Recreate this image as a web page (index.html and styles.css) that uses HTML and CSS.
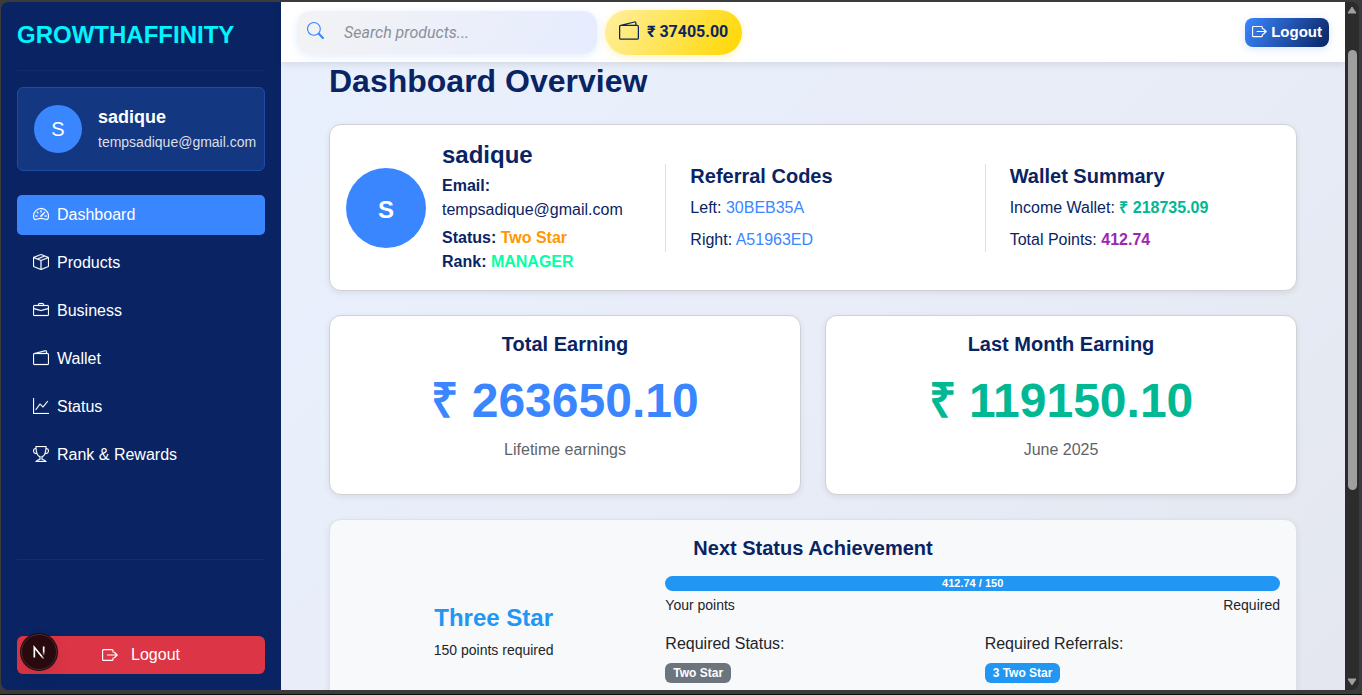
FILE: index.html
```
<!DOCTYPE html>
<html lang="en">
<head>
<meta charset="utf-8">
<title>GrowthAffinity – Dashboard</title>
<link rel="stylesheet" href="styles.css">
</head>
<body>
<svg class="sprite" aria-hidden="true">
  <symbol id="i-speed" viewBox="0 0 16 16"><path d="M8 4a.5.5 0 0 1 .5.5V6a.5.5 0 0 1-1 0V4.500A.5.5 0 0 1 8 4zM3.732 5.732a.5.5 0 0 1 .707 0l.915.914a.5.5 0 1 1-.708.708l-.914-.915a.5.5 0 0 1 0-.707zM2 10a.5.5 0 0 1 .5-.5h1.586a.5.5 0 0 1 0 1H2.500A.5.5 0 0 1 2 10zm9.500 0a.5.5 0 0 1 .5-.5h1.500a.5.5 0 0 1 0 1H12a.5.5 0 0 1-.5-.5zm.754-4.246a.389.389 0 0 0-.527-.02L7.547 9.310a.910.910 0 1 0 1.302 1.258l3.434-4.297a.389.389 0 0 0-.029-.518z"/><path fill-rule="evenodd" d="M0 10a8 8 0 1 1 15.547 2.661c-.442 1.253-1.845 1.602-2.932 1.250C11.309 13.488 9.475 13 8 13c-1.474 0-3.310.488-4.615.911-1.087.352-2.490.003-2.932-1.250A7.988 7.988 0 0 1 0 10zm8-7a7 7 0 0 0-6.603 9.329c.203.575.923.876 1.680.630C4.397 12.533 6.358 12 8 12s3.604.532 4.923.960c.757.245 1.477-.056 1.680-.631A7 7 0 0 0 8 3z"/></symbol>
  <symbol id="i-box" viewBox="0 0 16 16"><path d="M8.186 1.113a.5.5 0 0 0-.372 0L1.846 3.500l2.404.961L10.404 2l-2.218-.887zm3.564 1.426L5.596 5 8 5.961 14.154 3.500l-2.404-.961zm3.250 1.700-6.500 2.600v7.922l6.500-2.600V4.240zM7.500 14.762V6.838L1 4.239v7.923l6.500 2.600zM7.443.184a1.500 1.500 0 0 1 1.114 0l7.129 2.852A.5.5 0 0 1 16 3.500v8.662a1 1 0 0 1-.629.928l-7.185 2.874a.5.5 0 0 1-.372 0L.630 13.090a1 1 0 0 1-.630-.928V3.500a.5.5 0 0 1 .314-.464L7.443.184z"/></symbol>
  <symbol id="i-case" viewBox="0 0 16 16"><path d="M6.500 1A1.500 1.500 0 0 0 5 2.500V3H1.500A1.500 1.500 0 0 0 0 4.500v8A1.500 1.500 0 0 0 1.500 14h13a1.500 1.500 0 0 0 1.500-1.500v-8A1.500 1.500 0 0 0 14.500 3H11v-.5A1.500 1.500 0 0 0 9.500 1h-3zm0 1h3a.5.5 0 0 1 .5.5V3H6v-.5a.5.5 0 0 1 .5-.5zm1.886 6.914L15 7.151V12.500a.5.5 0 0 1-.5.5h-13a.5.5 0 0 1-.5-.5V7.150l6.614 1.764a1.500 1.500 0 0 0 .772 0zM1.500 4h13a.5.5 0 0 1 .5.5v1.616L8.129 7.948a.5.5 0 0 1-.258 0L1 6.116V4.500a.5.5 0 0 1 .5-.5z"/></symbol>
  <symbol id="i-wallet" viewBox="0 0 16 16"><path d="M12.136.326A1.500 1.500 0 0 1 14 1.780V3h.5A1.500 1.500 0 0 1 16 4.500v9a1.500 1.500 0 0 1-1.500 1.500h-13A1.500 1.500 0 0 1 0 13.500v-9a1.500 1.500 0 0 1 1.432-1.499L12.136.326zM5.562 3H13V1.780a.5.5 0 0 0-.621-.484L5.562 3zM1.500 4a.5.5 0 0 0-.5.5v9a.5.5 0 0 0 .5.5h13a.5.5 0 0 0 .5-.5v-9a.5.5 0 0 0-.5-.5h-13z"/></symbol>
  <symbol id="i-graph" viewBox="0 0 16 16"><path fill-rule="evenodd" d="M0 0h1v15h15v1H0V0zm14.817 3.113a.5.5 0 0 1 .07.704l-4.500 5.500a.5.5 0 0 1-.740.037L7.060 6.767l-3.656 5.027a.5.5 0 0 1-.808-.588l4-5.500a.5.5 0 0 1 .758-.06l2.609 2.610 4.150-5.073a.5.5 0 0 1 .704-.07z"/></symbol>
  <symbol id="i-trophy" viewBox="0 0 16 16"><path d="M2.500.5A.5.5 0 0 1 3 0h10a.5.5 0 0 1 .5.5c0 .538-.012 1.050-.034 1.536a3 3 0 1 1-1.133 5.890c-.790 1.865-1.878 2.777-2.833 3.011v2.173l1.425.356c.194.048.377.135.537.255L13.300 15.100a.5.5 0 0 1-.3.900H3a.5.5 0 0 1-.3-.9l1.838-1.379c.160-.120.343-.207.537-.255L6.500 13.110v-2.173c-.955-.234-2.043-1.146-2.833-3.012a3 3 0 1 1-1.132-5.890A33.076 33.076 0 0 1 2.500.5zm.099 2.540a2 2 0 0 0 .720 3.935c-.333-1.050-.588-2.346-.720-3.935zm10.083 3.935a2 2 0 0 0 .720-3.935c-.133 1.590-.388 2.885-.720 3.935zM3.504 1c.007.517.026 1.006.056 1.469.130 2.028.457 3.546.870 4.667C5.294 9.480 6.484 10 7 10a.5.5 0 0 1 .5.5v2.610a1 1 0 0 1-.757.970l-1.426.356a.5.5 0 0 0-.179.085L4.500 15h7l-.638-.479a.501.501 0 0 0-.180-.085l-1.425-.356a1 1 0 0 1-.757-.970V10.500A.5.5 0 0 1 9 10c.516 0 1.706-.520 2.570-2.864.413-1.120.740-2.640.870-4.667.030-.463.049-.952.056-1.469H3.504z"/></symbol>
  <symbol id="i-exit" viewBox="0 0 16 16"><path fill="none" stroke="currentColor" stroke-width="1.200" stroke-linejoin="round" stroke-linecap="round" d="M11 5V3.600A1 1 0 0 0 10 2.600H1.600a1 1 0 0 0-1 1v8.800a1 1 0 0 0 1 1H10a1 1 0 0 0 1-1V11M5.500 8h9.500M12.300 5.300 15.200 8l-2.900 2.700"/></symbol>
  <symbol id="i-search" viewBox="0 0 16 16"><path d="M11.742 10.344a6.500 6.500 0 1 0-1.397 1.398h-.001c.03.040.062.078.098.115l3.850 3.850a1 1 0 0 0 1.415-1.414l-3.850-3.850a1.007 1.007 0 0 0-.115-.1zM12 6.500a5.500 5.500 0 1 1-11 0 5.500 5.500 0 0 1 11 0z"/></symbol>
</svg>

<div class="window">
  <aside class="sidebar">
    <div class="brand">GROWTHAFFINITY</div>
    <div class="user">
      <span class="avatar">S</span>
      <div class="user-text">
        <div class="user-name">sadique</div>
        <div class="user-mail">tempsadique@gmail.com</div>
      </div>
    </div>
    <nav class="nav">
      <a class="nav-link active" href="#dashboard"><svg class="icon"><use href="#i-speed"/></svg>Dashboard</a>
      <a class="nav-link" href="#products"><svg class="icon"><use href="#i-box"/></svg>Products</a>
      <a class="nav-link" href="#business"><svg class="icon"><use href="#i-case"/></svg>Business</a>
      <a class="nav-link" href="#wallet"><svg class="icon"><use href="#i-wallet"/></svg>Wallet</a>
      <a class="nav-link" href="#status"><svg class="icon"><use href="#i-graph"/></svg>Status</a>
      <a class="nav-link" href="#rank"><svg class="icon"><use href="#i-trophy"/></svg>Rank &amp; Rewards</a>
    </nav>
    <div class="side-foot">
      <button class="side-logout" type="button"><svg class="icon"><use href="#i-exit"/></svg>Logout</button>
      <button class="dev-badge" type="button" aria-label="Developer tools">
        <svg viewBox="0 0 40 40" fill="none">
          <defs>
            <linearGradient id="n1" x1="0" y1="0" x2="0" y2="1"><stop offset=".5" stop-color="#fff"/><stop offset="1" stop-color="#fff" stop-opacity="0"/></linearGradient>
            <linearGradient id="n2" gradientUnits="userSpaceOnUse" x1="14" y1="14" x2="27" y2="28"><stop offset=".7" stop-color="#fff"/><stop offset="1" stop-color="#fff" stop-opacity=".2"/></linearGradient>
          </defs>
          <path d="M14.500 26.500V14.500L25.500 28" stroke="url(#n2)" stroke-width="2"/>
          <rect x="24.500" y="13.500" width="2" height="11" fill="url(#n1)"/>
        </svg>
      </button>
    </div>
  </aside>

  <div class="page">
    <header class="topbar">
      <label class="search">
        <svg class="icon"><use href="#i-search"/></svg>
        <input type="search" placeholder="Search products..." aria-label="Search products">
      </label>
      <a class="balance" href="#wallet"><svg class="icon"><use href="#i-wallet"/></svg>₹ 37405.00</a>
      <button class="top-logout" type="button"><svg class="icon"><use href="#i-exit"/></svg>Logout</button>
    </header>

    <main class="content">
      <h1>Dashboard Overview</h1>

      <section class="card profile">
        <div class="person">
          <span class="avatar large">S</span>
          <div>
            <h2 class="name">sadique</h2>
            <p class="mail"><b>Email:</b> tempsadique@gmail.com</p>
            <p><b>Status: <span class="orange">Two Star</span></b></p>
            <p><b>Rank: <span class="mint">MANAGER</span></b></p>
          </div>
        </div>
        <div class="facts">
          <h3>Referral Codes</h3>
          <p>Left: <span class="blue">30BEB35A</span></p>
          <p>Right: <span class="blue">A51963ED</span></p>
        </div>
        <div class="facts">
          <h3>Wallet Summary</h3>
          <p>Income Wallet: <b class="green">₹ 218735.09</b></p>
          <p>Total Points: <b class="purple">412.74</b></p>
        </div>
      </section>

      <div class="earnings">
        <section class="card earning">
          <h3>Total Earning</h3>
          <div class="amount blue">₹ 263650.10</div>
          <p class="muted">Lifetime earnings</p>
        </section>
        <section class="card earning">
          <h3>Last Month Earning</h3>
          <div class="amount green">₹ 119150.10</div>
          <p class="muted">June 2025</p>
        </section>
      </div>

      <section class="card next">
        <h3>Next Status Achievement</h3>
        <div class="next-grid">
          <div class="goal">
            <h2 class="goal-name">Three Star</h2>
            <p class="small">150 points required</p>
          </div>
          <div>
            <div class="progress" role="progressbar" aria-valuenow="100" aria-label="Points">412.74 / 150</div>
            <div class="scale"><span>Your points</span><span>Required</span></div>
            <div class="needs">
              <div><p>Required Status:</p><span class="badge gray">Two Star</span></div>
              <div><p>Required Referrals:</p><span class="badge">3 Two Star</span></div>
            </div>
          </div>
        </div>
      </section>
    </main>
  </div>

  <div class="scrollbar" aria-hidden="true">
    <svg class="arrow" viewBox="0 0 10 8"><path d="M5 1 9 7H1z"/></svg>
    <div class="track"><div class="thumb"></div></div>
    <svg class="arrow" viewBox="0 0 10 8"><path d="M1 1h8L5 7z"/></svg>
  </div>
</div>
</body>
</html>
```
FILE: styles.css
```
* { box-sizing: border-box; }

body {
  margin: 0;
  height: 100vh;
  padding: 2px 3px 4px 1px;
  overflow: hidden;
  background: #3b3b3b;
  border-bottom: 1px solid #0c0c0c;
  color: #212529;
  font: 16px/24px "Liberation Sans", Arial, sans-serif;
}

h1, h2, h3, p { margin: 0; }
button { border: 0; font: inherit; cursor: pointer; }
a { text-decoration: none; }

.sprite { position: absolute; width: 0; height: 0; }
.icon { width: 16px; height: 16px; fill: currentColor; flex: none; }

.window {
  display: flex;
  height: 100%;
  border-radius: 8px;
  overflow: hidden;
  background: #2c2c2c;
}

/* Sidebar */
.sidebar {
  display: flex;
  flex-direction: column;
  flex: none;
  width: 280px;
  padding: 16px;
  background: #0a2463;
  color: #fff;
}
.brand {
  padding-bottom: 18px;
  border-bottom: 1px solid #102c6d;
  color: #00f5ff;
  font-size: 24px;
  font-weight: bold;
  line-height: 34px;
}
.user {
  display: flex;
  align-items: center;
  gap: 16px;
  height: 84px;
  margin: 16px 0 24px;
  padding: 0 8px 0 16px;
  background: #143781;
  border: 1px solid #1f4ba2;
  border-radius: 6px;
}
.avatar {
  display: grid;
  place-items: center;
  flex: none;
  width: 48px;
  height: 48px;
  border-radius: 50%;
  background: #3a86ff;
  color: #fff;
  font-size: 20px;
}
.user-name { font-size: 18px; font-weight: bold; line-height: 26px; }
.user-mail { color: #dcdfe6; font-size: 14px; }

.nav { display: flex; flex-direction: column; gap: 8px; }
.nav-link {
  display: flex;
  align-items: center;
  gap: 8px;
  padding: 8px 16px;
  border-radius: 5px;
  color: #fff;
}
.nav-link.active { background: #3a86ff; }
.nav .icon { stroke: currentColor; stroke-width: .2px; margin-bottom: 2px; }

.side-foot {
  position: relative;
  margin-top: auto;
  padding-top: 76px;
  border-top: 1px solid #152d6b;
}
.side-logout {
  display: flex;
  align-items: center;
  justify-content: center;
  gap: 13px;
  width: 100%;
  height: 38px;
  border-radius: 6px;
  background: #dc3545;
  color: #fff;
}
.dev-badge {
  position: absolute;
  left: 4px;
  bottom: 4px;
  width: 36px;
  height: 36px;
  padding: 0;
  border: 1px solid #50282f;
  border-radius: 50%;
  background: #28090d;
  box-shadow: 0 0 0 1px #1c0d12, 0 6px 16px rgba(0, 0, 0, .1);
}
.dev-badge svg { display: block; width: 100%; height: 100%; }

/* Main column */
.page {
  display: flex;
  flex: 1;
  flex-direction: column;
  min-width: 0;
  background: linear-gradient(135deg, #e9f0fd, #e8edf8 50%, #e4e7ef);
}
.topbar {
  display: flex;
  align-items: center;
  gap: 8px;
  flex: none;
  height: 60px;
  padding: 0 16px;
  background: #fff;
  box-shadow: 0 2px 8px rgba(0, 0, 0, .1);
}
.search {
  display: flex;
  align-items: center;
  gap: 20px;
  width: 300px;
  height: 43px;
  padding: 0 10px;
  border-radius: 14px;
  background: linear-gradient(120deg, #f3f3f4, #e6ecff);
  box-shadow: 0 2px 8px rgba(58, 134, 255, .14);
  color: #3a86ff;
}
.search input {
  flex: 1;
  min-width: 0;
  padding: 0;
  border: 0;
  outline: 0;
  background: none;
  color: #0a2463;
  font: 16px Roboto, sans-serif;
}
.search input::placeholder { color: #8b8f9b; font-style: italic; }
.search .icon { width: 17px; height: 17px; margin-bottom: 3px; }
.balance {
  display: flex;
  align-items: center;
  gap: 8px;
  height: 45px;
  padding: 0 14px 2px;
  border-radius: 23px;
  background: linear-gradient(120deg, #fff0a0, #ffd700);
  box-shadow: 0 2px 8px rgba(255, 215, 0, .25);
  color: #0a2463;
  font: bold 16px Roboto, sans-serif;
}
.balance .icon { width: 20px; height: 20px; }
.top-logout {
  display: flex;
  align-items: center;
  gap: 4px;
  height: 29px;
  margin-left: auto;
  padding: 0 7px;
  border-radius: 8px;
  background: linear-gradient(120deg, #3a86ff, #0a2463);
  box-shadow: 0 2px 8px rgba(58, 134, 255, .2);
  color: #fff;
  font-size: 15px;
  font-weight: bold;
}
.top-logout .icon { width: 15px; height: 15px; margin-bottom: 1px; }

.content {
  display: flex;
  flex: 1;
  flex-direction: column;
  gap: 24px;
  min-height: 0;
  padding: 0 48px;
  overflow: hidden;
}
.content > * { flex: none; }
h1, h2, h3 { color: #0a2463; }
h1 { font-size: 32px; line-height: 38px; }
h2 { font-size: 24px; line-height: 28px; }
h3 { font-size: 20px; line-height: 24px; }

.card {
  padding: 16px;
  border: 1px solid #d0d1d4;
  border-radius: 12px;
  background: #fff;
  box-shadow: 0 2px 6px rgba(0, 0, 0, .08);
}
.profile {
  display: grid;
  grid-template-columns: repeat(3, 1fr);
  align-items: center;
  gap: 24px;
  color: #0a2463;
}
.person { display: flex; align-items: center; gap: 16px; }
.avatar.large { width: 80px; height: 80px; padding-top: 4px; font-size: 24px; font-weight: bold; }
.name { margin-bottom: 5px; }
.mail { margin-bottom: 4px; }
.facts {
  display: flex;
  flex-direction: column;
  gap: 8px;
  padding-left: 24px;
  border-left: 1px solid #dee2e6;
}

.earnings { display: grid; grid-template-columns: 1fr 1fr; gap: 24px; }
.earning { padding-bottom: 32px; text-align: center; }
.amount { margin-top: 8px; font-size: 48px; font-weight: bold; line-height: 74px; }
.muted { color: #5f6368; }

.blue { color: #3a86ff; }
.green { color: #00b894; }
.purple { color: #9c27b0; }
.orange { color: #ff9800; }
.mint { color: #06ffa5; }

.next { background: #f8f9fb; border-color: #dfe1e5; }
.next h3 { margin-bottom: 16px; text-align: center; }
.next-grid { display: grid; grid-template-columns: calc((100% - 48px) / 3) 1fr; gap: 24px; }
.goal { align-self: center; text-align: center; }
.goal-name { margin-bottom: 8px; color: #2196f3; }
.small { font-size: 14px; line-height: 21px; }
.progress {
  border-radius: 8px;
  background: #2196f3;
  color: #fff;
  font-size: 11px;
  font-weight: bold;
  line-height: 15px;
  text-align: center;
}
.scale {
  display: flex;
  justify-content: space-between;
  padding: 4px 0 16px;
  font-size: 14px;
  line-height: 21px;
}
.needs { display: grid; grid-template-columns: 1fr 1fr; gap: 24px; padding-bottom: 6px; }
.badge {
  display: block;
  width: fit-content;
  margin-top: 7px;
  padding: 0 8px;
  border-radius: 6px;
  background: #2196f3;
  color: #fff;
  font-size: 12px;
  font-weight: bold;
  line-height: 20px;
}
.badge.gray { background: #6c757d; }

/* Scrollbar */
.scrollbar {
  display: flex;
  flex-direction: column;
  align-items: center;
  flex: none;
  width: 14px;
  padding: 4px 0;
  background: #2c2c2c;
}
.arrow { width: 10px; height: 8px; fill: #9f9f9f; stroke: #9f9f9f; stroke-linejoin: round; }
.track { flex: 1; padding-top: 36px; }
.thumb { width: 9px; height: 70%; border-radius: 5px; background: #9f9f9f; }
```
